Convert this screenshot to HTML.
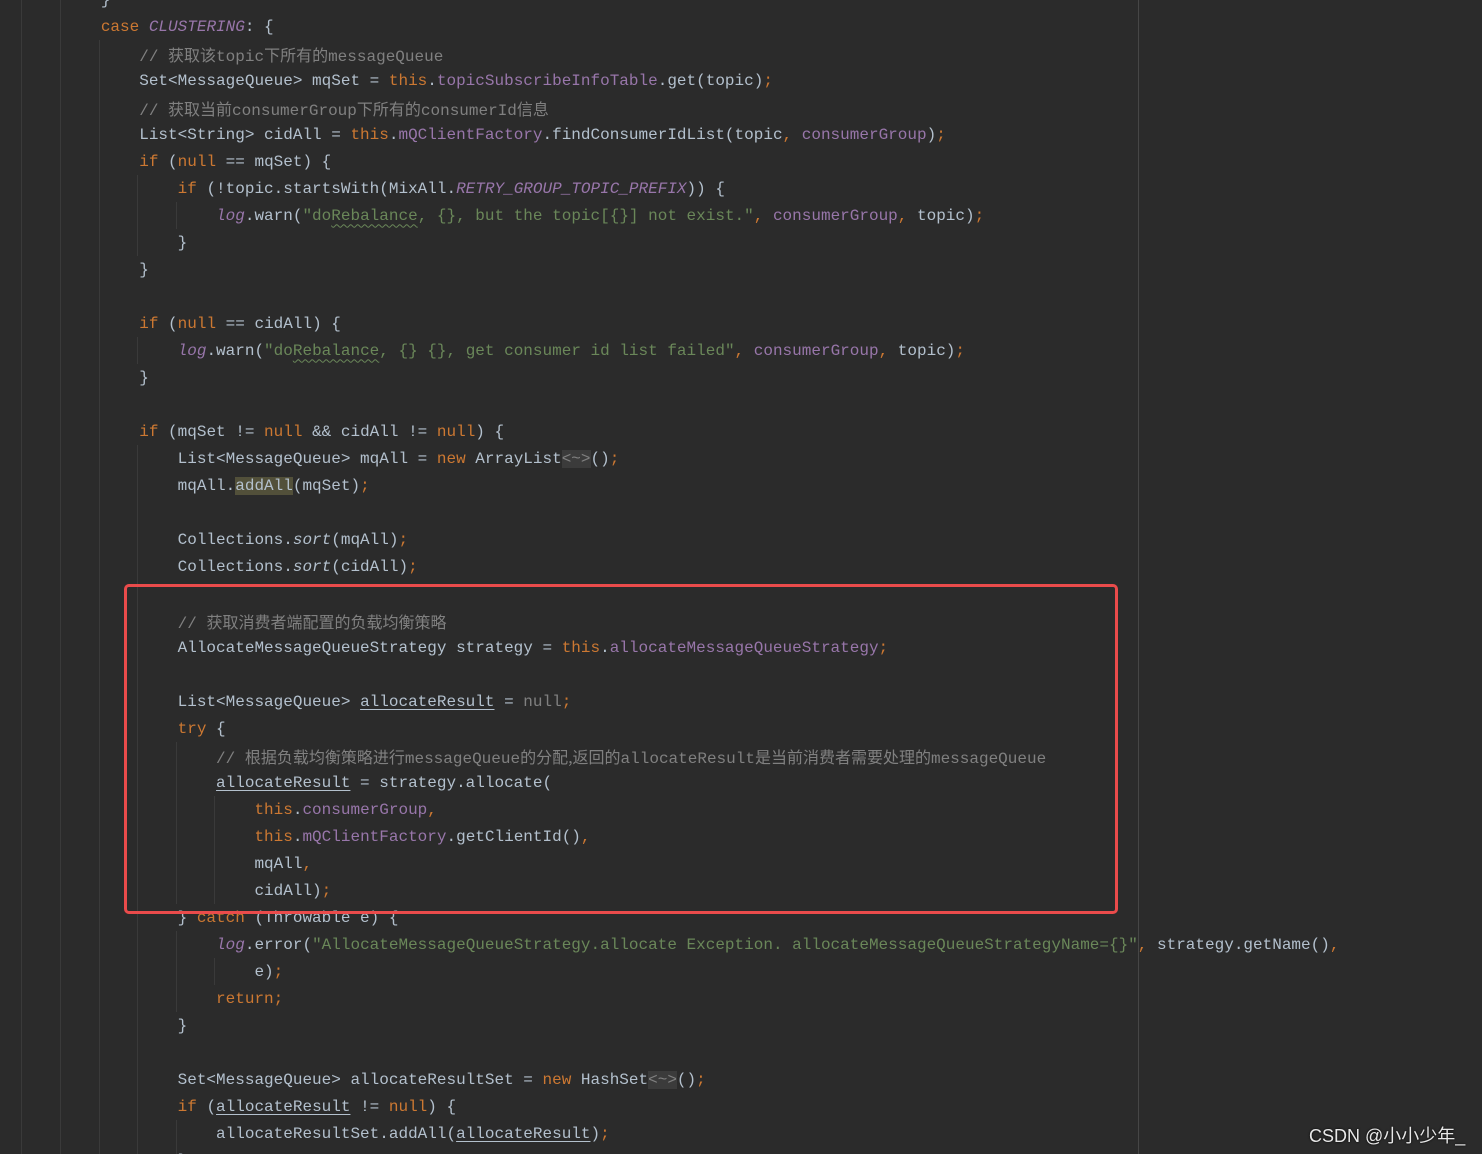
<!DOCTYPE html>
<html><head><meta charset="utf-8"><style>
html,body{margin:0;padding:0;overflow:hidden;height:1154px}
body{width:1482px;height:1154px;background:#2b2b2b;position:relative;overflow:hidden;font-family:"Liberation Mono","Noto Sans CJK SC",monospace;font-size:16px;color:#b3c0cd}
.l{position:absolute;left:24px;height:27px;line-height:27px;white-space:pre}
.k{color:#cc7832}.f{color:#9876aa}.fi{color:#9876aa;font-style:italic}.s{color:#6a8759}.c{color:#808080}.i{font-style:italic}
.g{color:#808080}
.u{text-decoration:underline;text-underline-offset:3px;text-decoration-thickness:1px}
.w{text-decoration:underline wavy #6a8759;text-underline-offset:4px;text-decoration-thickness:1px}
.hl{background:#52503a}
.dm{background:#3b3b3b;color:#808080}
.cj{font-family:"Noto Sans CJK SC",sans-serif;font-size:16px}
.v{position:absolute;width:1px;background:#3a3a3a}
#box{position:absolute;left:124px;top:584px;width:988px;height:324px;border:3px solid #ea4b4b;border-radius:5px}
#wm{position:absolute;left:1309px;top:1122px;font-family:"Liberation Sans","Noto Sans CJK SC",sans-serif;font-size:18px;color:#e8e8e8;text-shadow:0 0 2px #000}
#c{position:absolute;left:0;top:1px;width:1482px;height:1154px}
</style></head><body>
<div class="v" style="left:21px;top:0;height:1154px"></div>
<div class="v" style="left:60px;top:0;height:1154px"></div>
<div class="v" style="left:99px;top:40px;height:1114px"></div>
<div class="v" style="left:137px;top:175px;height:81px"></div>
<div class="v" style="left:137px;top:337px;height:27px"></div>
<div class="v" style="left:137px;top:445px;height:709px"></div>
<div class="v" style="left:176px;top:202px;height:27px"></div>
<div class="v" style="left:176px;top:742px;height:162px"></div>
<div class="v" style="left:176px;top:931px;height:81px"></div>
<div class="v" style="left:176px;top:1120px;height:34px"></div>
<div class="v" style="left:214px;top:796px;height:108px"></div>
<div class="v" style="left:214px;top:958px;height:27px"></div>
<div class="v" style="left:1138px;top:0;height:1154px;background:#464646"></div>
<div id="c">
<div class="l" style="top:-14.5px">        }</div>
<div class="l" style="top:12.5px">        <span class="k">case </span><span class="fi">CLUSTERING</span>: {</div>
<div class="l" style="top:39.5px">            <span class="c">// <span class="cj">获取该</span>topic<span class="cj">下所有的</span>messageQueue</span></div>
<div class="l" style="top:66.5px">            Set&lt;MessageQueue&gt; mqSet = <span class="k">this</span>.<span class="f">topicSubscribeInfoTable</span>.get(topic)<span class="k">;</span></div>
<div class="l" style="top:93.5px">            <span class="c">// <span class="cj">获取当前</span>consumerGroup<span class="cj">下所有的</span>consumerId<span class="cj">信息</span></span></div>
<div class="l" style="top:120.5px">            List&lt;String&gt; cidAll = <span class="k">this</span>.<span class="f">mQClientFactory</span>.findConsumerIdList(topic<span class="k">, </span><span class="f">consumerGroup</span>)<span class="k">;</span></div>
<div class="l" style="top:147.5px">            <span class="k">if </span>(<span class="k">null </span>== mqSet) {</div>
<div class="l" style="top:174.5px">                <span class="k">if </span>(!topic.startsWith(MixAll.<span class="fi">RETRY_GROUP_TOPIC_PREFIX</span>)) {</div>
<div class="l" style="top:201.5px">                    <span class="fi">log</span>.warn(<span class="s">"do<span class="w">Rebalance</span>, {}, but the topic[{}] not exist."</span><span class="k">, </span><span class="f">consumerGroup</span><span class="k">, </span>topic)<span class="k">;</span></div>
<div class="l" style="top:228.5px">                }</div>
<div class="l" style="top:255.5px">            }</div>
<div class="l" style="top:309.5px">            <span class="k">if </span>(<span class="k">null </span>== cidAll) {</div>
<div class="l" style="top:336.5px">                <span class="fi">log</span>.warn(<span class="s">"do<span class="w">Rebalance</span>, {} {}, get consumer id list failed"</span><span class="k">, </span><span class="f">consumerGroup</span><span class="k">, </span>topic)<span class="k">;</span></div>
<div class="l" style="top:363.5px">            }</div>
<div class="l" style="top:417.5px">            <span class="k">if </span>(mqSet != <span class="k">null </span>&amp;&amp; cidAll != <span class="k">null</span>) {</div>
<div class="l" style="top:444.5px">                List&lt;MessageQueue&gt; mqAll = <span class="k">new </span>ArrayList<span class="dm">&lt;~&gt;</span>()<span class="k">;</span></div>
<div class="l" style="top:471.5px">                mqAll.<span class="hl">addAll</span>(mqSet)<span class="k">;</span></div>
<div class="l" style="top:525.5px">                Collections.<span class="i">sort</span>(mqAll)<span class="k">;</span></div>
<div class="l" style="top:552.5px">                Collections.<span class="i">sort</span>(cidAll)<span class="k">;</span></div>
<div class="l" style="top:606.5px">                <span class="c">// <span class="cj">获取消费者端配置的负载均衡策略</span></span></div>
<div class="l" style="top:633.5px">                AllocateMessageQueueStrategy strategy = <span class="k">this</span>.<span class="f">allocateMessageQueueStrategy</span><span class="k">;</span></div>
<div class="l" style="top:687.5px">                List&lt;MessageQueue&gt; <span class="u">allocateResult</span> = <span class="g">null</span><span class="k">;</span></div>
<div class="l" style="top:714.5px">                <span class="k">try </span>{</div>
<div class="l" style="top:741.5px">                    <span class="c">// <span class="cj">根据负载均衡策略进行</span>messageQueue<span class="cj">的分配,返回的</span>allocateResult<span class="cj">是当前消费者需要处理的</span>messageQueue</span></div>
<div class="l" style="top:768.5px">                    <span class="u">allocateResult</span> = strategy.allocate(</div>
<div class="l" style="top:795.5px">                        <span class="k">this</span>.<span class="f">consumerGroup</span><span class="k">,</span></div>
<div class="l" style="top:822.5px">                        <span class="k">this</span>.<span class="f">mQClientFactory</span>.getClientId()<span class="k">,</span></div>
<div class="l" style="top:849.5px">                        mqAll<span class="k">,</span></div>
<div class="l" style="top:876.5px">                        cidAll)<span class="k">;</span></div>
<div class="l" style="top:903.5px">                } <span class="k">catch </span>(Throwable e) {</div>
<div class="l" style="top:930.5px">                    <span class="fi">log</span>.error(<span class="s">"AllocateMessageQueueStrategy.allocate Exception. allocateMessageQueueStrategyName={}"</span><span class="k">, </span>strategy.getName()<span class="k">,</span></div>
<div class="l" style="top:957.5px">                        e)<span class="k">;</span></div>
<div class="l" style="top:984.5px">                    <span class="k">return;</span></div>
<div class="l" style="top:1011.5px">                }</div>
<div class="l" style="top:1065.5px">                Set&lt;MessageQueue&gt; allocateResultSet = <span class="k">new </span>HashSet<span class="dm">&lt;~&gt;</span>()<span class="k">;</span></div>
<div class="l" style="top:1092.5px">                <span class="k">if </span>(<span class="u">allocateResult</span> != <span class="k">null</span>) {</div>
<div class="l" style="top:1119.5px">                    allocateResultSet.addAll(<span class="u">allocateResult</span>)<span class="k">;</span></div>
<div class="l" style="top:1146.5px">                }</div>
</div>
<div id="box"></div>
<div id="wm">CSDN @小小少年_</div>
</body></html>
